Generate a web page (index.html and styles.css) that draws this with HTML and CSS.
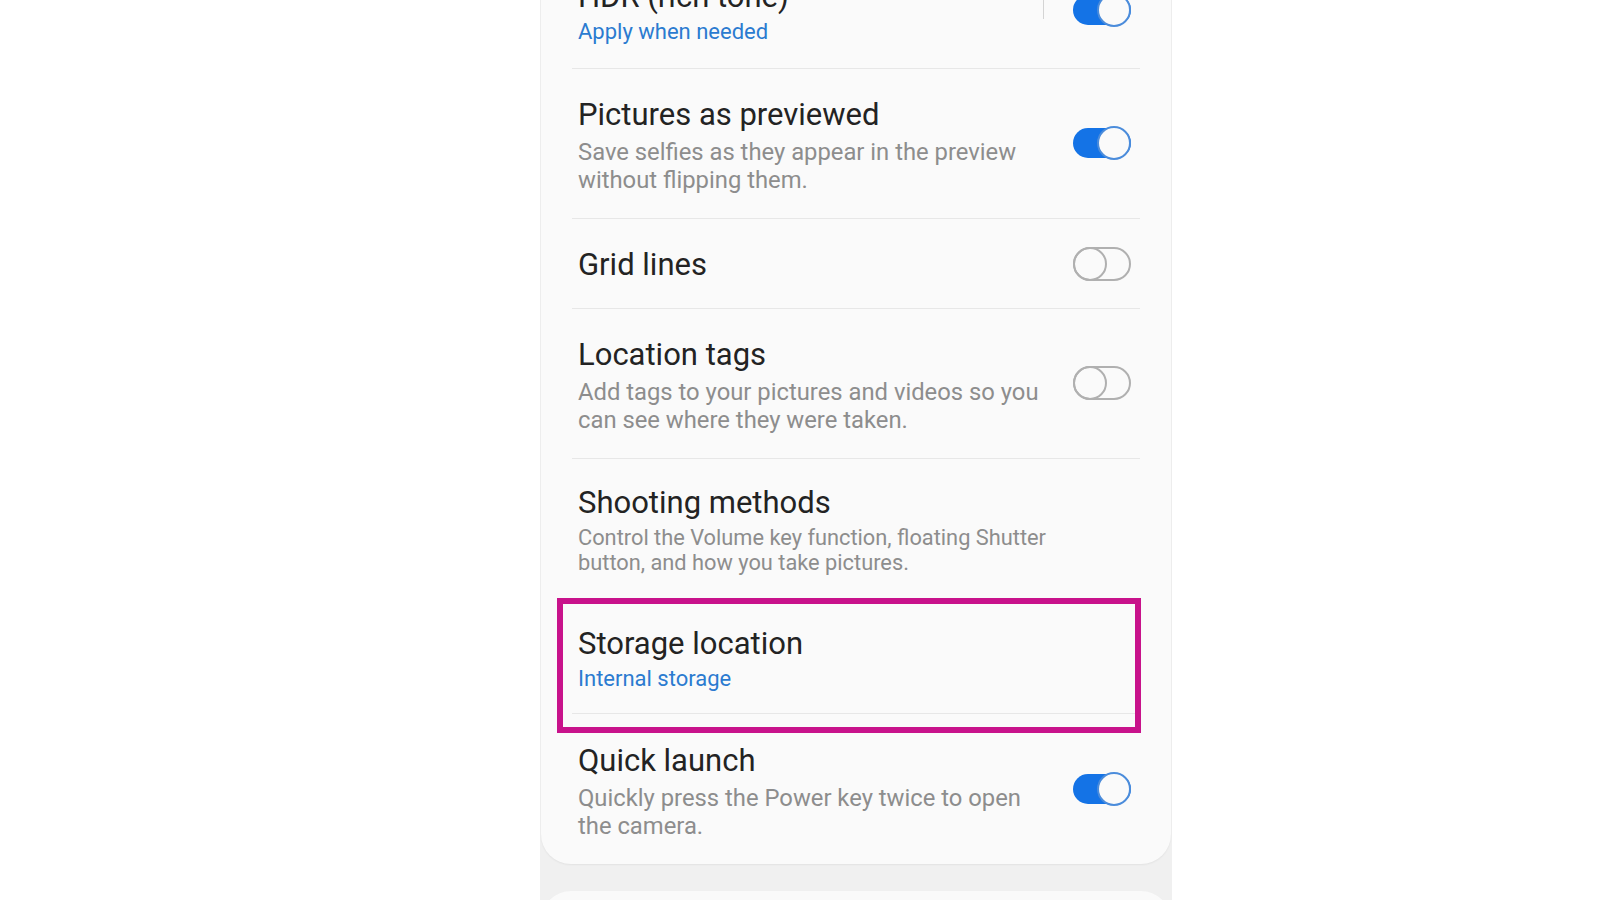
FILE: index.html
```html
<!DOCTYPE html>
<html lang="en">
<head>
<meta charset="utf-8">
<title>Camera settings</title>
<link rel="stylesheet" href="styles.css">
</head>
<body>
<div class="phone">
  <div class="card">
    <div class="row row-hdr">
      <div class="text">
        <div class="title">HDR (rich tone)</div>
        <div class="link">Apply when needed</div>
      </div>
      <div class="sep"></div>
      <div class="toggle on"><span class="track"></span><span class="thumb"></span></div>
    </div>
    <div class="row">
      <div class="text">
        <div class="title">Pictures as previewed</div>
        <div class="sub">Save selfies as they appear in the preview<br>without flipping them.</div>
      </div>
      <div class="toggle on"><span class="track"></span><span class="thumb"></span></div>
    </div>
    <div class="row row-single">
      <div class="text">
        <div class="title">Grid lines</div>
      </div>
      <div class="toggle off"><span class="track"></span><span class="thumb"></span></div>
    </div>
    <div class="row">
      <div class="text">
        <div class="title">Location tags</div>
        <div class="sub">Add tags to your pictures and videos so you<br>can see where they were taken.</div>
      </div>
      <div class="toggle off"><span class="track"></span><span class="thumb"></span></div>
    </div>
    <div class="row row-shoot">
      <div class="text">
        <div class="title">Shooting methods</div>
        <div class="sub small">Control the Volume key function, floating Shutter<br>button, and how you take pictures.</div>
      </div>
    </div>
    <div class="row row-storage">
      <div class="text">
        <div class="title">Storage location</div>
        <div class="link">Internal storage</div>
      </div>
    </div>
    <div class="row row-last">
      <div class="text">
        <div class="title">Quick launch</div>
        <div class="sub">Quickly press the Power key twice to open<br>the camera.</div>
      </div>
      <div class="toggle on"><span class="track"></span><span class="thumb"></span></div>
    </div>
  </div>
  <div class="card card-next"></div>
</div>
</body>
</html>
```

FILE: styles.css
```css
html, body {
  margin: 0;
  padding: 0;
  background: #ffffff;
  height: 900px;
  overflow: hidden;
  font-family: Roboto, "Noto Sans", "Liberation Sans", sans-serif;
}
.phone {
  margin-left: 540px;
  width: 632px;
  height: 900px;
  background: #f0f0f0;
  overflow: hidden;
}
.card {
  margin: -49px 1px 0 1px;
  background: #fafafa;
  border-radius: 0 0 30px 30px;
  box-shadow: 0 1px 2px rgba(0, 0, 0, 0.06);
}
.card-next {
  margin-top: 27px;
  height: 60px;
  border-radius: 30px 30px 0 0;
}
.row {
  position: relative;
  display: flex;
  align-items: center;
  margin: 0 31px;
  padding: 28px 9px 24px 6px;
  border-bottom: 1px solid #e7e7e7;
}
.row-hdr {
  padding-bottom: 22px;
}
.row-single {
  padding-bottom: 25px;
}
.row-shoot {
  padding-top: 26px;
  padding-bottom: 26px;
}
.row-storage {
  padding-top: 24px;
  padding-bottom: 20px;
}
.row-storage::after {
  content: "";
  position: absolute;
  top: -4px;
  left: -15px;
  right: -1px;
  bottom: -20px;
  border: 6px solid #c8128b;
}
.row-last {
  border-bottom: none;
  padding-top: 29px;
  padding-bottom: 24px;
}
.text {
  flex: 1;
  min-width: 0;
}
.title {
  font-size: 31px;
  line-height: 36px;
  color: #232323;
  white-space: nowrap;
}
.sub {
  margin-top: 5px;
  font-size: 23.8px;
  line-height: 28px;
  color: #8d8d8d;
  white-space: nowrap;
}
.sub.small {
  margin-top: 4px;
  font-size: 21.8px;
  line-height: 25px;
}
.link {
  margin-top: 3px;
  font-size: 22px;
  line-height: 28px;
  color: #2b7bd0;
  white-space: nowrap;
}
.sep {
  width: 1px;
  height: 36px;
  background: #d4d4d4;
  margin-right: 29px;
  align-self: flex-start;
  margin-top: 4px;
}
.toggle {
  position: relative;
  flex: none;
  width: 58px;
  height: 34px;
  margin-bottom: 5px;
}
.row-single .toggle {
  margin-bottom: 2px;
}
.track {
  position: absolute;
  left: 0;
  right: 0;
  top: 2px;
  bottom: 2px;
  border-radius: 15px;
  box-sizing: border-box;
}
.thumb {
  position: absolute;
  top: 0;
  width: 34px;
  height: 34px;
  border-radius: 50%;
  box-sizing: border-box;
}
.toggle.on .track {
  background: #1473e6;
}
.toggle.on .thumb {
  right: 0;
  background: #fafafa;
  border: 2px solid #4b8cdb;
}
.toggle.off .track {
  top: 0;
  bottom: 0;
  border-radius: 17px;
  border: 2px solid #b0b0b0;
}
.toggle.off .thumb {
  left: 0;
  border: 2px solid #b0b0b0;
}
```
